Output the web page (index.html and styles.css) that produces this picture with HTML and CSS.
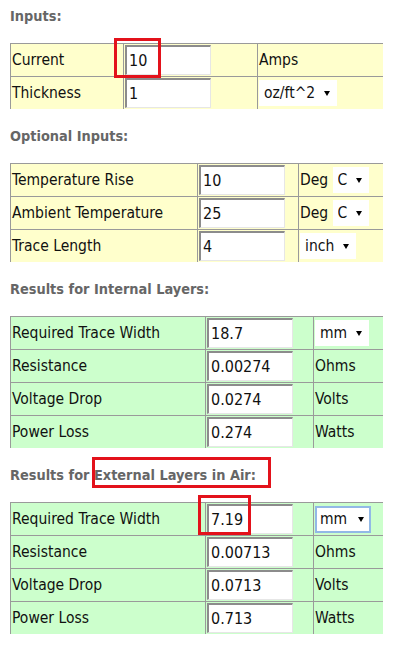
FILE: index.html
```html
<!DOCTYPE html>
<html lang="en">
<head>
    <meta charset="UTF-8">
    <meta name="viewport" content="width=device-width, initial-scale=1.0">
    <title>Trace Width Calculator</title>
    <link rel="stylesheet" href="styles.css">
</head>
<body>

<div class="page">
    <h2 class="head">Inputs:</h2>
    <table class="grid yellow t-in">
        <colgroup><col class="c-label"><col class="c-val"><col></colgroup>
        <tr>
            <td>Current</td>
            <td><span class="mark mark-in"><input class="num" type="text" value="10"></span></td>
            <td>Amps</td>
        </tr>
        <tr>
            <td>Thickness</td>
            <td><input class="num" type="text" value="1"></td>
            <td><span class="pick"><select><option>oz/ft^2</option><option>mils</option><option>mm</option></select></span></td>
        </tr>
    </table>

    <h2 class="head">Optional Inputs:</h2>
    <table class="grid yellow t-opt">
        <colgroup><col class="c-label"><col class="c-val"><col></colgroup>
        <tr>
            <td>Temperature Rise</td>
            <td><input class="num" type="text" value="10"></td>
            <td>Deg <span class="pick"><select><option>C</option><option>F</option></select></span></td>
        </tr>
        <tr>
            <td>Ambient Temperature</td>
            <td><input class="num" type="text" value="25"></td>
            <td>Deg <span class="pick"><select><option>C</option><option>F</option></select></span></td>
        </tr>
        <tr>
            <td>Trace Length</td>
            <td><input class="num" type="text" value="4"></td>
            <td><span class="pick"><select><option>inch</option><option>mil</option><option>mm</option></select></span></td>
        </tr>
    </table>

    <h2 class="head">Results for Internal Layers:</h2>
    <table class="grid green t-res">
        <colgroup><col class="c-label"><col class="c-val"><col></colgroup>
        <tr>
            <td>Required Trace Width</td>
            <td><input class="num" type="text" value="18.7"></td>
            <td><span class="pick"><select><option>mm</option><option>mil</option></select></span></td>
        </tr>
        <tr>
            <td>Resistance</td>
            <td><input class="num" type="text" value="0.00274"></td>
            <td>Ohms</td>
        </tr>
        <tr>
            <td>Voltage Drop</td>
            <td><input class="num" type="text" value="0.0274"></td>
            <td>Volts</td>
        </tr>
        <tr>
            <td>Power Loss</td>
            <td><input class="num" type="text" value="0.274"></td>
            <td>Watts</td>
        </tr>
    </table>

    <h2 class="head">Results for <span class="mark mark-head">External Layers in Air:</span></h2>
    <table class="grid green t-res">
        <colgroup><col class="c-label"><col class="c-val"><col></colgroup>
        <tr>
            <td>Required Trace Width</td>
            <td><span class="mark mark-out"><input class="num" type="text" value="7.19"></span></td>
            <td><span class="pick focus"><select><option>mm</option><option>mil</option></select></span></td>
        </tr>
        <tr>
            <td>Resistance</td>
            <td><input class="num" type="text" value="0.00713"></td>
            <td>Ohms</td>
        </tr>
        <tr>
            <td>Voltage Drop</td>
            <td><input class="num" type="text" value="0.0713"></td>
            <td>Volts</td>
        </tr>
        <tr>
            <td>Power Loss</td>
            <td><input class="num" type="text" value="0.713"></td>
            <td>Watts</td>
        </tr>
    </table>
</div>

</body>
</html>
```

FILE: styles.css
```css
body {
    margin: 0;
    font-family: 'DejaVu Sans Condensed', 'DejaVu Sans', Verdana, sans-serif;
    font-size: 15.5px;
    color: #111;
    background-color: #fff;
}
.page {
    display: flex;
    flex-direction: column;
    gap: 18px;
    padding: 7px 10px;
}
.head {
    margin: 0;
    font-size: 14.4px;
    line-height: 18px;
    font-weight: bold;
    color: #666;
}
.grid {
    width: 373px;
    table-layout: fixed;
    border-collapse: separate;
    border-spacing: 0;
}
.grid td {
    border-top: 1px solid #9a9a9a;
    border-left: 1px solid #9a9a9a;
    padding: 1px;
    vertical-align: middle;
    white-space: nowrap;
}
.yellow td {
    background-color: #ffffcc;
}
.green td {
    background-color: #ccffcc;
}
.t-in .c-label { width: 113px; }
.t-in .c-val { width: 134px; }
.t-opt .c-label { width: 187px; }
.t-opt .c-val { width: 101px; }
.t-res .c-label { width: 195px; }
.t-res .c-val { width: 108px; }

.num {
    display: block;
    box-sizing: border-box;
    width: 86px;
    height: 30px;
    margin: 0;
    padding: 0 2px;
    border-top: 2px solid #8c8c8c;
    border-left: 2px solid #8c8c8c;
    border-right: 1px solid #e6e6e6;
    border-bottom: 1px solid #e6e6e6;
    background-color: #fff;
    font-family: 'DejaVu Sans Condensed', 'DejaVu Sans', Verdana, sans-serif;
    font-size: 16px;
    color: #111;
    outline: none;
}

/* dropdowns: white box, small black arrow */
.pick {
    position: relative;
    display: inline-block;
    vertical-align: middle;
}
.pick select {
    -webkit-appearance: none;
    appearance: none;
    box-sizing: border-box;
    height: 26px;
    margin: 0;
    padding: 0 21px 0 5px;
    border: none;
    border-radius: 0;
    background-color: #fff;
    font-family: 'DejaVu Sans Condensed', 'DejaVu Sans', Verdana, sans-serif;
    font-size: 15.5px;
    color: #111;
    outline: none;
}
.pick::after {
    content: "";
    position: absolute;
    right: 7px;
    top: 11px;
    border-left: 3px solid transparent;
    border-right: 3px solid transparent;
    border-top: 5px solid #000;
    pointer-events: none;
}
.pick.focus select {
    border: 2px solid #92b9e6;
    padding-left: 3px;
    height: 27px;
}

/* red annotation boxes */
.mark {
    position: relative;
}
.mark::after {
    content: "";
    position: absolute;
    box-sizing: border-box;
    border: 3px solid #e3121b;
    pointer-events: none;
}
.mark-in,
.mark-out {
    display: block;
    width: fit-content;
}
.mark-in::after {
    left: -11px;
    top: -7px;
    width: 47px;
    height: 40px;
}
.mark-out::after {
    left: -9px;
    top: -9px;
    width: 53px;
    height: 40px;
}
.mark-head::after {
    left: -2px;
    right: -15px;
    top: -10px;
    bottom: -5px;
}
```
